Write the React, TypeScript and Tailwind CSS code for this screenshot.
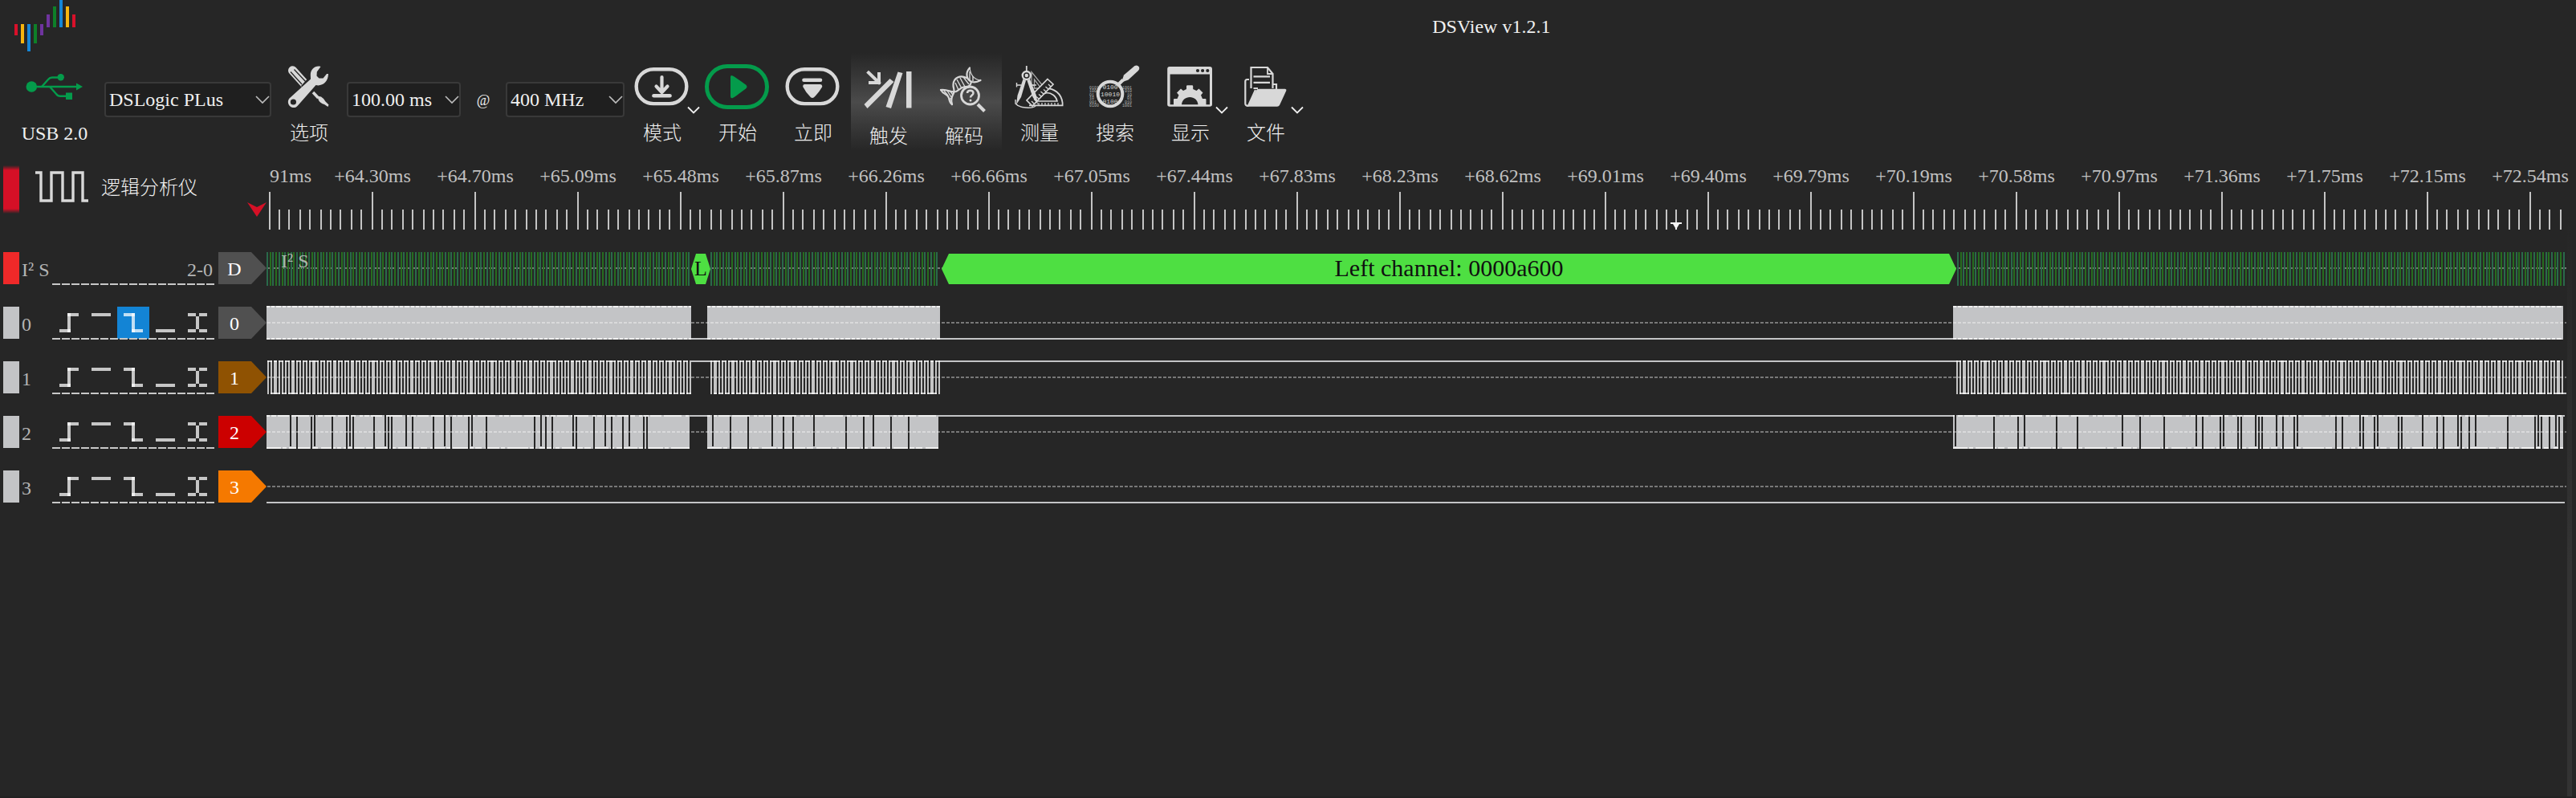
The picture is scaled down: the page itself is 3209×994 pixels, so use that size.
import React from "react";

const INK = "#d8d8d8";

/* ---------- logo ---------- */

const LOGO_BARS: [number, number, number, string][] = [
  [18, 30, 44, "#d8102a"],
  [26, 30, 54, "#f6b40e"],
  [34, 30, 64, "#1486d8"],
  [42, 30, 54, "#0e8028"],
  [50, 30, 44, "#6f349f"],
  [58, 18, 34, "#6f349f"],
  [66, 8, 34, "#0e8028"],
  [74, 0, 34, "#1486d8"],
  [82, 8, 34, "#f6b40e"],
  [90, 18, 34, "#d8102a"],
];

function Logo() {
  return (
    <svg width="112" height="66" viewBox="0 0 112 66" aria-hidden="true">
      {LOGO_BARS.map(([x, top, bottom, fill]) => (
        <rect key={x} x={x} y={top} width="4" height={bottom - top} fill={fill} />
      ))}
    </svg>
  );
}

/* ---------- toolbar icons, all on a 94 x 68 board ---------- */

function Board({ children, width = 94 }: { children: React.ReactNode; width?: number }) {
  return (
    <svg width={width} height="68" viewBox={`0 0 ${width} 68`} fill="none" aria-hidden="true" className="shrink-0">
      {children}
    </svg>
  );
}

const Caret = () => <path d="M79 59.5 L86 66.5 L93 59.5" stroke="#f0f0f0" strokeWidth="1.8" />;

const UsbIcon = () => (
  <Board width={124}>
    <g stroke="#049b4b" strokeWidth="2.4" fill="none">
      <path d="M34 34 H92" />
      <path d="M46 34 L54 25 Q56 22.500 59 22.500 H68" />
      <path d="M56 34 L64 43 Q66 45.700 69 45.700 H77" />
    </g>
    <g fill="#049b4b">
      <circle cx="33.300" cy="34" r="6.800" />
      <circle cx="69.700" cy="22.300" r="4.200" />
      <rect x="76" y="41.500" width="8" height="8.500" />
      <path d="M89 29.500 L97 34 L89 38.500 Z" />
    </g>
  </Board>
);

const ToolsIcon = () => (
  <Board>
    <path d="M26.500 13.800 L42.500 31.500" stroke={INK} strokeWidth="11" strokeLinecap="round" />
    <path d="M37 33 L47 22 L51 26 L41 38 Z" fill="#262626" />
    <path d="M24 15.500 L38 31 M28.500 12.500 L43 28" stroke="#262626" strokeWidth="1.300" />
    <path d="M52 41 L58.500 48" stroke={INK} strokeWidth="3.500" />
    <path d="M57 45.500 L62 46.500 Q66 49 67.500 52.500 L71.500 56.500 L70.500 59 L66 56 Q61 54.500 59 51 Z" fill={INK} />
    <path
      d="M61.500 9 C55 7 49 12 48.800 19 L49 24.500 L22.500 48.500 C20 51.500 20.500 56 23.500 58.500 C26.500 61 31 60.500 33 57.500 L55.500 32 C63 34 71 28 71 18 L69 18 L64.500 23.500 L59.500 23.500 L56.500 20.500 L56.800 15.500 Z"
      fill={INK}
    />
    <circle cx="27.400" cy="53" r="3.600" fill="#262626" />
  </Board>
);

const ModeIcon = () => (
  <Board>
    <rect x="14.700" y="12.200" width="62.600" height="42.900" rx="21.400" stroke={INK} strokeWidth="4.400" />
    <path d="M46.500 22 V38 M39.500 33.500 L46.500 41 L53.500 33.500" stroke={INK} strokeWidth="4.200" strokeLinecap="round" strokeLinejoin="round" />
    <path d="M36.500 45.300 H56.500" stroke={INK} strokeWidth="4.600" strokeLinecap="round" />
    <Caret />
  </Board>
);

const StartIcon = () => (
  <Board>
    <rect x="8.500" y="8.500" width="75" height="51" rx="25.500" stroke="#049b4b" strokeWidth="5" />
    <path d="M38 22 Q38 19 41 20.500 Q43 21.500 57 31.500 Q60 34 57 36.500 Q43 47 41 48 Q38 49 38 46 Z" fill="#049b4b" />
  </Board>
);

const InstantIcon = () => (
  <Board>
    <rect x="14.700" y="12.200" width="62.600" height="42.900" rx="21.400" stroke={INK} strokeWidth="4.400" />
    <path d="M35.500 25.700 H56" stroke={INK} strokeWidth="4.600" strokeLinecap="round" />
    <path d="M36 31 H56 Q59 31.500 58 34.500 Q54 41.500 48 47.300 Q46 48.500 44 47.300 Q38 41.500 34.500 34.500 Q33.500 31.500 36 31 Z" fill={INK} />
  </Board>
);

const TriggerIcon = () => (
  <Board>
    <rect x="69" y="11" width="6.500" height="45.500" fill={INK} />
    <path d="M58.500 11.500 L64.500 13 L50 57 L43.500 55 Z" fill={INK} />
    <path d="M48.500 20 L53.500 24 L20.500 57 L16.500 52 Z" fill={INK} />
    <path d="M22 12.500 L35 25 M35 14 V25 H24" stroke={INK} strokeWidth="4" strokeLinecap="square" />
  </Board>
);

const DecodeIcon = () => (
  <Board>
    <g stroke={INK} strokeWidth="2.200" strokeLinecap="round">
      <path d="M54 6.500 C48 13 50 22 57 24 C61 25 64 24 67.500 22" />
      <path d="M54 6.500 C55 15 59 21 67.500 22" strokeWidth="1.200" />
      <path d="M50 19 C42 15 34 19 33.500 27 C33 32 36 34 34 38 C32 42 30 46 32 52" />
      <path d="M56 24 C55 28 54 30 48 30 C42 31 40 35 37 36 C30 38 28 33 18 34" />
      <path d="M18 34 C22 41 26 38 28 44 C29 48 29 50 32 52" />
    </g>
    <g stroke={INK} strokeWidth="1.400">
      <path d="M54 11 V22 M58 17 V23 M38 21 L44 32 M42 19 L48 30 M46 18 L53 27 M36 25 L40 34" />
      <path d="M22 35 L27 41 M26 35 L31 43 M30 36 L33 40 M28 46 L32 44" />
    </g>
    <circle cx="54.500" cy="41" r="11" fill="#454545" stroke={INK} strokeWidth="2.800" />
    <path d="M51 38 C51 33.500 58.500 33.500 58.500 38 C58.500 40.500 55 40.500 55 43.500" stroke={INK} strokeWidth="2.500" />
    <circle cx="55" cy="47" r="1.500" fill={INK} />
    <path d="M64 52 L72.500 60.500" stroke={INK} strokeWidth="4" />
  </Board>
);

const MeasureIcon = () => (
  <Board>
    <g stroke="#a8a8a8" strokeWidth="1.300">
      <path d="M37 15.500 V40 H57 Z" />
      <path d="M40.500 25 V36 H49 Z" />
      <path d="M37 36 L40 38 M37 31 L40 33" />
    </g>
    <path d="M34 57.300 H75.600 V54 C74 42 65 36 55 36 C50 36 46 38 43 41" fill="#262626" stroke={INK} strokeWidth="1.800" />
    <path d="M44 52 H69 C68 46 62 41.500 56 41.500 L52 43" stroke={INK} strokeWidth="1.600" />
    <path d="M46 57 V54 M50 57 V54 M54 57 V54 M58 57 V54 M62 57 V54 M66 57 V54 M70 57 V54" stroke={INK} strokeWidth="1.200" />
    <path d="M57 24.500 L64 31 L38 58 L31 51 Z" fill="#262626" stroke={INK} strokeWidth="1.700" />
    <path d="M61 34 L58 31 M58 37 L54.500 34 M55 40 L52 37.500 M52 43 L48.500 40 M49 46 L46 43.500 M46 49 L43 46.500 M43 52 L40 49.500 M40 55 L37 52" stroke={INK} strokeWidth="1.300" />
    <path d="M30.800 8 V15" stroke={INK} strokeWidth="1.800" />
    <circle cx="30.800" cy="20" r="5" stroke={INK} strokeWidth="2.400" />
    <circle cx="30.800" cy="20" r="2.200" fill={INK} />
    <path d="M26.500 24.500 L30 26.500 L24 47 L18 56.500 L19.500 45 Z" fill={INK} />
    <path d="M35 24.500 L31.500 26.500 L38.500 47 L45 56.500 L43 45 Z" fill={INK} />
    <path d="M18.500 29 V34.500 M18.500 32 H24 M38 32 H43" stroke={INK} strokeWidth="1.400" />
    <path d="M17 50 V55 C22 61 38 61.500 42 58" stroke={INK} strokeWidth="1.400" />
  </Board>
);

/* bits printed left and right of the lens, then the ones seen through it */
const SIDE_BITS: [string, string][] = [["0101", "1001"], ["100", "010"], ["01", "10"], ["10", "01"], ["001", "010"], ["0100", "1001"]];
const LENS_BITS = ["0100", "10010", "0100"];

const SearchIcon = () => (
  <Board>
    <g fill="#b4b4b4" fontFamily="Liberation Mono, monospace" fontSize="5">
      {SIDE_BITS.map(([left, right], i) => (
        <React.Fragment key={i}>
          <text x="15" y={37 + i * 4.4}>{left}</text>
          <text x="68" y={37 + i * 4.4} textAnchor="end">{right}</text>
        </React.Fragment>
      ))}
    </g>
    <g fill={INK} fontFamily="Liberation Mono, monospace" fontSize="8">
      {LENS_BITS.map((row, i) => (
        <text key={i} x="41" y={37 + i * 9} textAnchor="middle">{row}</text>
      ))}
    </g>
    <circle cx="41" cy="43" r="15.300" stroke={INK} strokeWidth="4" />
    <path d="M51.500 31 L57 25.500" stroke={INK} strokeWidth="4" />
    <path d="M55 28.500 L58 19.500 L71.500 8 Q75 6.500 77 9.500 Q78 12 76 14 L63.500 25.500 Z" fill={INK} />
  </Board>
);

const DisplayIcon = () => (
  <Board>
    <path
      fillRule="evenodd"
      d="M21 9 H71 Q74 9 74 12 V56 Q74 58.700 71 58.700 H21 Q18.200 58.700 18.200 56 V12 Q18.200 9 21 9 Z M21.600 18.500 V56.300 H71 V18.500 Z"
      fill={INK}
    />
    <g fill="#262626">
      <circle cx="56" cy="14" r="2.100" />
      <circle cx="62.100" cy="14" r="2.100" />
      <circle cx="68.300" cy="14" r="2.100" />
    </g>
    <path
      d="M42 37 V33.500 Q42 32.300 43.200 32.300 H49 Q50.200 32.300 50.200 33.500 V37 L54.500 39 L57.500 36.500 L62.500 41.500 L60 44.500 L62 49 H65.500 Q66.500 49 66.500 50 V57 H56.500 C56.500 43.500 36 43.500 36 57 H26 V50 Q26 49 27 49 H30.500 L32.500 44.500 L30 41.500 L35 36.500 L38 39 Z"
      fill={INK}
    />
    <Caret />
  </Board>
);

const FileIcon = () => (
  <Board>
    <path d="M28.500 36 V10 H49 L55.500 18 V36" stroke={INK} strokeWidth="2.200" />
    <path d="M49 10 V18 H55.500" stroke={INK} strokeWidth="1.800" />
    <path d="M31.500 21.300 H52 M31.500 28.800 H52 M31.500 36 H37" stroke={INK} strokeWidth="2.200" />
    <path d="M26 25 H23.500 Q21.300 25 21.300 27.500 V55 Q21.300 58 25 57.800 L34 38 M56 31 H60 V37" stroke={INK} strokeWidth="2.200" />
    <path d="M38 36.700 H71 Q73 37 72.300 39 L64 57 Q63 58.700 61 58.700 H26 Q24.500 58.500 25.500 56.500 L34.500 39 Q36 36.700 38 36.700 Z" fill={INK} />
    <Caret />
  </Board>
);

/* ---------- toolbar ---------- */

function ToolButton({ label, checked = false, children }: { label: string; checked?: boolean; children: React.ReactNode }) {
  return (
    <button
      type="button"
      aria-pressed={checked}
      className={
        "flex h-[122px] w-[94px] shrink-0 flex-col items-center gap-3 font-light leading-6 " +
        (checked ? "bg-linear-to-b from-[#262626] via-[#4b4b4b] to-[#262626] pt-3" : "pt-2")
      }
    >
      {children}
      <span>{label}</span>
    </button>
  );
}

function Picker({ label, value, width }: { label: string; value: string; width: string }) {
  return (
    <div className={"relative mt-[36px] h-11 shrink-0 " + width}>
      <select
        aria-label={label}
        defaultValue={value}
        className="h-full w-full appearance-none rounded border-2 border-[#393939] bg-[#1f1f1f] pl-1 text-[#f0f0f0] outline-none"
      >
        <option>{value}</option>
      </select>
      <svg width="18" height="11" viewBox="0 0 18 11" fill="none" className="pointer-events-none absolute top-[17px] right-0.5" aria-hidden="true">
        <path d="M1 1 L9 9 L17 1" stroke="#bdbdbd" strokeWidth="1.600" />
      </svg>
    </div>
  );
}

function Toolbar() {
  return (
    <div role="toolbar" className="flex h-[122px] items-start pl-1.5 text-[#f0f0f0]">
      <div className="flex w-[124px] shrink-0 flex-col items-center gap-3 pt-2 leading-6">
        <UsbIcon />
        <span>USB 2.0</span>
      </div>
      <Picker label="设备" value="DSLogic PLus" width="w-[208px]" />
      <ToolButton label="选项"><ToolsIcon /></ToolButton>
      <Picker label="时长" value="100.00 ms" width="w-[142px]" />
      <span className="mt-[47px] w-14 shrink-0 text-center text-lg leading-6">@</span>
      <Picker label="采样率" value="400 MHz" width="w-[148px]" />
      <ToolButton label="模式"><ModeIcon /></ToolButton>
      <ToolButton label="开始"><StartIcon /></ToolButton>
      <ToolButton label="立即"><InstantIcon /></ToolButton>
      <ToolButton label="触发" checked><TriggerIcon /></ToolButton>
      <ToolButton label="解码" checked><DecodeIcon /></ToolButton>
      <ToolButton label="测量"><MeasureIcon /></ToolButton>
      <ToolButton label="搜索"><SearchIcon /></ToolButton>
      <ToolButton label="显示"><DisplayIcon /></ToolButton>
      <ToolButton label="文件"><FileIcon /></ToolButton>
    </div>
  );
}

/* ---------- time ruler ---------- */

const TIMES = [
  "+64.30ms", "+64.70ms", "+65.09ms", "+65.48ms", "+65.87ms", "+66.26ms", "+66.66ms", "+67.05ms",
  "+67.44ms", "+67.83ms", "+68.23ms", "+68.62ms", "+69.01ms", "+69.40ms", "+69.79ms", "+70.19ms",
  "+70.58ms", "+70.97ms", "+71.36ms", "+71.75ms", "+72.15ms", "+72.54ms",
];

const TICKS = Array.from({ length: 224 }, (_, k) => ({ x: 3 + 2 * Math.floor(6.4 * k + 0.001), major: k % 10 === 0 }));

function Ruler() {
  return (
    <div className="flex min-w-0 flex-1 flex-col">
      <div className="flex pt-[19px] leading-6 text-[#c0c0c0]">
        <span className="w-[68px] shrink-0 pl-1">91ms</span>
        {TIMES.map((t) => (
          <span key={t} className="w-32 shrink-0 text-center">{t}</span>
        ))}
      </div>
      <svg className="mt-2 h-12 w-full" aria-hidden="true">
        {TICKS.map(({ x, major }) => (
          <rect key={x} x={x} y={major ? 0 : 22} width="2" height={major ? 47 : 25} fill="#c4c4c4" />
        ))}
        <path d="M1749 38 H1763 V40 H1760 L1757 45 V47 H1755 V45 L1752 40 H1749 Z" fill="#f4f4f4" />
      </svg>
    </div>
  );
}

function DeviceRow() {
  return (
    <div className="flex h-[125px]">
      <div className="relative flex w-[332px] shrink-0 items-start pl-1">
        <div className="mt-[18px] h-[60px] w-5 bg-[linear-gradient(#262626,#d51026_10%,#d51026_90%,#262626)]" />
        <svg width="68" height="42" viewBox="0 0 68 42" fill="none" className="mt-6 ml-5" aria-hidden="true">
          <path d="M0 3 H7 V38 H20 V3 H34 V38 H47 V3 H59 V38 H66" stroke={INK} strokeWidth="3.400" />
        </svg>
        <span className="mt-[34px] ml-[14px] font-light leading-6 text-[#f0f0f0]">逻辑分析仪</span>
        <svg width="24" height="18" viewBox="0 0 24 18" className="absolute top-16 right-0" aria-hidden="true">
          <path d="M0 0 L12 6 L24 0 L12 18 Z" fill="#d51026" />
        </svg>
      </div>
      <Ruler />
    </div>
  );
}

/* ---------- channel header ---------- */

const TRIGGERS: { name: string; rects: [number, number, number, number][] }[] = [
  { name: "上升沿", rects: [[8, 28, 14, 4], [18, 8, 4, 24], [18, 8, 14, 4]] },
  { name: "高电平", rects: [[8, 8, 24, 4]] },
  { name: "下降沿", rects: [[8, 8, 14, 4], [18, 8, 4, 24], [18, 28, 14, 4]] },
  { name: "低电平", rects: [[8, 28, 24, 4]] },
  { name: "双沿", rects: [[8, 8, 10, 4], [22, 8, 10, 4], [18, 12, 4, 16], [8, 28, 10, 4], [22, 28, 10, 4]] },
];

function ChannelHeader({ name, tag, block, tagFill, children }: {
  name: string; tag: string; block: string; tagFill: string; children: React.ReactNode;
}) {
  return (
    <div className="flex w-[332px] shrink-0 items-start pt-px pl-1">
      <div className={"h-10 w-5 shrink-0 " + block} />
      <span className="w-[41px] shrink-0 pt-2.5 pl-[3px] leading-6 whitespace-nowrap text-[#b4b4b4]">{name}</span>
      <div className="flex w-[202px] flex-col">
        <div className="flex h-10 pl-px">{children}</div>
        <svg className="-mt-px h-0.5 w-full" aria-hidden="true">
          <line x1="0" y1="1" x2="202" y2="1" stroke="#c8c8c8" strokeWidth="2" strokeDasharray="10 2" />
        </svg>
      </div>
      <svg width="60" height="40" viewBox="0 0 60 40" className="ml-[5px] shrink-0" aria-hidden="true">
        <path d="M0 0 H41 L60 20 L41 40 H0 Z" fill={tagFill} />
        <text x="20" y="29" textAnchor="middle" fontSize="24" fill="#ffffff">{tag}</text>
      </svg>
    </div>
  );
}

function TriggerButtons({ selected }: { selected?: number }) {
  return (
    <>
      {TRIGGERS.map((t, i) => (
        <button key={t.name} type="button" aria-label={t.name} className={"h-10 w-10 " + (i === selected ? "bg-[#1384d5]" : "")}>
          <svg width="40" height="40" viewBox="0 0 40 40" fill="#ffffff" fillOpacity="0.740" aria-hidden="true">
            {t.rects.map((r, n) => (
              <rect key={n} x={r[0]} y={r[1]} width={r[2]} height={r[3]} />
            ))}
          </svg>
        </button>
      ))}
    </>
  );
}

/* ---------- waveforms; x is measured from the left edge of the trace area ---------- */

const WIRE = "#c3c4c6";
const END = 2863;

const MidLine = () => (
  <line x1="1" y1="21" x2={END + 2} y2="21" stroke="#ffffff" strokeOpacity="0.380" strokeWidth="2" strokeDasharray="4 2" />
);

function stripes(from: number, to: number) {
  const out: { x: number; fill: string }[] = [];
  for (let k = 0; ; k++) {
    const x = from + Math.round(3.7 * k);
    if (x + 2 > to) return out;
    out.push({ x, fill: k % 2 ? "#266d1e" : "#2a6a4a" });
  }
}

const STRIPES = [...stripes(0, 527), ...stripes(553, 838), ...stripes(2106, 2864)];

function DecoderWave() {
  return (
    <>
      <MidLine />
      <rect x="529" y="18" width="24" height="6" fill="#262626" />
      {STRIPES.map(({ x, fill }) => (
        <rect key={x} x={x} y="1" width="2" height="42" fill={fill} />
      ))}
      <text x="18" y="20" fontSize="24" fill="#d0d0d0" fillOpacity="0.800">I² S</text>
      <path d="M529 22 L535 3 H547 L553 22 L547 41 H535 Z" fill="#4edf42" />
      <text x="541" y="30" textAnchor="middle" fontSize="26" fill="#101010">L</text>
      <path d="M841 22 L850 3 H2096 L2105 22 L2096 41 H850 Z" fill="#4edf42" />
      <text x="1473" y="31" textAnchor="middle" fontSize="30" fill="#101010">Left channel: 0000a600</text>
    </>
  );
}

const BURSTS: [number, number][] = [[0, 529], [549, 839], [2101, 2861]];

function ClockWave() {
  return (
    <>
      <path d="M529 41 H549 M839 41 H2101" stroke={WIRE} strokeWidth="2" />
      {BURSTS.map(([a, b]) => (
        <g key={a}>
          <rect x={a} y="0" width={b - a} height="42" fill={WIRE} />
          <path d={`M${a} 1 H${b} M${a} 41 H${b}`} stroke="#f0f0f0" strokeWidth="2" strokeDasharray="4 2 4 2 6 2" />
        </g>
      ))}
      <MidLine />
    </>
  );
}

function edges(base: number, phase: number, first: number, to: number) {
  const out: number[] = [];
  for (let k = first; ; k++) {
    const x = base + 2 * Math.floor(1.85 * k + phase);
    if (x + 2 > to) return out;
    out.push(x);
  }
}

const EDGE_SETS = [edges(5, 0.17, -1, 529), edges(553, 0.17, 0, 839), edges(2105, 0.4, 0, 2861)];

function FrameWave() {
  return (
    <>
      <path d={`M529 1 H553 M839 1 H2105 M2861 41 H${END + 2}`} stroke={WIRE} strokeWidth="2" />
      <g fill="#ffffff" fillOpacity="0.730">
        {EDGE_SETS.map((set) =>
          set.map((x, i) => (
            <React.Fragment key={x}>
              <rect x={x} y="0" width="2" height="42" />
              {i + 1 < set.length && <rect x={x} y={i % 2 ? 40 : 0} width={set[i + 1] + 2 - x} height="2" />}
            </React.Fragment>
          ))
        )}
      </g>
      <MidLine />
    </>
  );
}

const SLITS = [
  29, 37, 55, 59, 81, 99, 103, 107, 133, 147, 151, 155, 173, 181, 207, 221, 229, 251, 255, 273, 333, 341, 347, 355,
  381, 385, 407, 421, 429, 443, 451, 469, 473, 555, 577, 599, 629, 643, 655, 681, 721, 743, 755, 777, 799,
  2103, 2151, 2181, 2189, 2229, 2255, 2311, 2333, 2363, 2403, 2411, 2433, 2437, 2455, 2459, 2477, 2481, 2485, 2503,
  2511, 2525, 2529, 2577, 2585, 2607, 2611, 2625, 2629, 2655, 2659, 2685, 2703, 2711, 2729, 2733, 2743, 2751, 2791,
  2825, 2829, 2833, 2843, 2851, 2855,
];

const DATA_BURSTS: [number, number][] = [[0, 527], [549, 837], [2101, 2861]];

function DataWave() {
  return (
    <>
      <path d={`M527 1 H549 M837 1 H2101 M2861 1 H${END}`} stroke={WIRE} strokeWidth="2" />
      {DATA_BURSTS.map(([a, b]) => (
        <g key={a}>
          <rect x={a} y="0" width={b - a} height="42" fill={WIRE} />
          <path d={`M${a} 1 H${b}`} stroke="#f0f0f0" strokeWidth="2" strokeDasharray="4 2 6 2 14 3 22 5" />
          <path d={`M${a} 41 H${b}`} stroke="#f0f0f0" strokeWidth="2" strokeDasharray="18 2 5 3 26 2 8 4" />
        </g>
      ))}
      {SLITS.map((x, i) => (
        <rect key={x} x={x} y={i % 3 ? 2 : 0} width="2" height={i % 3 ? 40 : 39} fill="#262626" />
      ))}
      <MidLine />
    </>
  );
}

function IdleWave() {
  return (
    <>
      <MidLine />
      <path d={`M0 41 H${END}`} stroke={WIRE} strokeWidth="2" />
    </>
  );
}

const CHANNELS: { name: string; tagFill: string; selected?: number; Wave: () => React.JSX.Element }[] = [
  { name: "0", tagFill: "#505050", selected: 2, Wave: ClockWave },
  { name: "1", tagFill: "#8f5202", Wave: FrameWave },
  { name: "2", tagFill: "#cc0000", Wave: DataWave },
  { name: "3", tagFill: "#f57900", Wave: IdleWave },
];

function Trace({ children }: { children: React.ReactNode }) {
  return <svg className="h-11 min-w-0 flex-1" aria-hidden="true">{children}</svg>;
}

export default function App() {
  return (
    <div className="flex min-h-screen flex-col overflow-x-hidden bg-[#262626] font-['Liberation_Serif','Noto_Sans_CJK_SC',serif] text-2xl">
      <header className="flex h-[66px] items-center">
        <div className="w-[55.6%] shrink-0"><Logo /></div>
        <h1 className="leading-6 text-[#f0f0f0]">DSView v1.2.1</h1>
      </header>
      <Toolbar />
      <main className="flex flex-1">
        <div className="min-w-0 flex-1">
          <DeviceRow />
          <div className="flex flex-col gap-6">
            <div className="flex h-11">
              <ChannelHeader name="I² S" tag="D" block="bg-[#ef2929]" tagFill="#505050">
                <span className="flex-1 pt-2.5 pr-0.5 text-right leading-6 text-[#b4b4b4]">2-0</span>
              </ChannelHeader>
              <Trace><DecoderWave /></Trace>
            </div>
            {CHANNELS.map(({ name, tagFill, selected, Wave }) => (
              <div key={name} className="flex h-11">
                <ChannelHeader name={name} tag={name} block="bg-[#c3c4c6]" tagFill={tagFill}>
                  <TriggerButtons selected={selected} />
                </ChannelHeader>
                <Trace><Wave /></Trace>
              </div>
            ))}
          </div>
        </div>
        <div className="w-[11px] pt-20">
          <div className="h-full w-1.5 bg-linear-to-b from-[#262626] to-[#333333] to-60%" />
        </div>
      </main>
      <footer className="h-0.5 bg-[#212121]" />
    </div>
  );
}
